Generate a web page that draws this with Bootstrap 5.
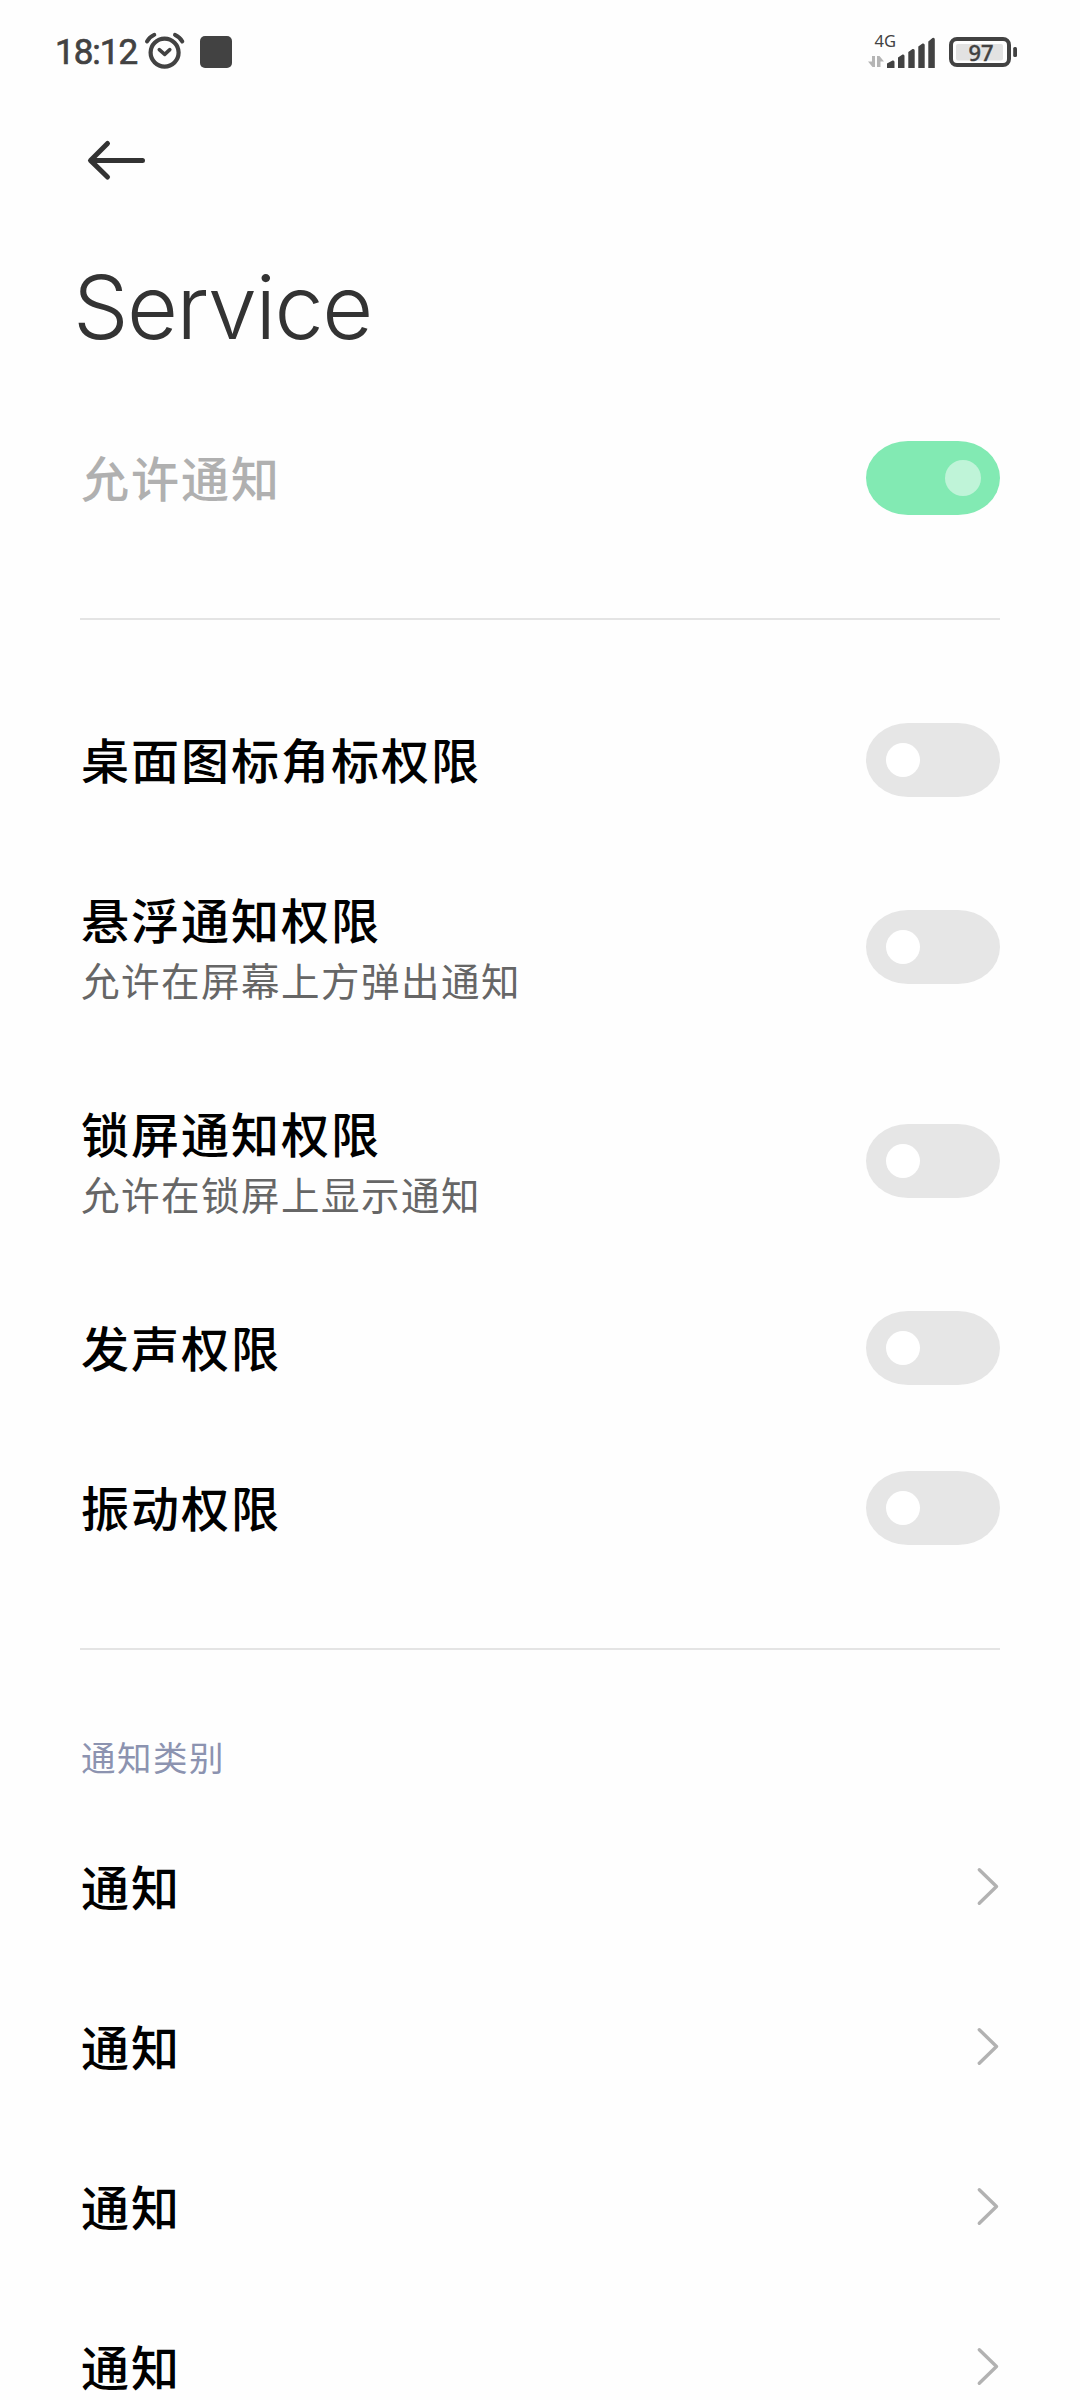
<!DOCTYPE html>
<html lang="zh-CN">
<head>
<meta charset="utf-8">
<meta name="viewport" content="width=device-width, initial-scale=1">
<title>Service</title>
<link href="https://cdn.jsdelivr.net/npm/bootstrap@5.3.0/dist/css/bootstrap.min.css" rel="stylesheet">
<style>
body{background:#fefefe;color:#000;font-family:"Noto Sans CJK SC",sans-serif}
svg{overflow:visible}
.screen{width:1080px;height:2400px;overflow:hidden}
.status{height:104px;padding:0 62px 0 55px;color:#424242}
.clock{font:400 35px/40px Roboto,sans-serif;width:89px;padding-top:1px;letter-spacing:-1px;-webkit-text-stroke:.7px #424242;white-space:nowrap}
.square{margin-left:14px}
.cell-signal{margin-right:12px}
.topbar{height:112px;padding-left:80px}
.page-title{font:300 88px/110px Inter,sans-serif;letter-spacing:-1.5px;color:#333;height:182px;padding:36px 0 0 73px;margin:0}
.setting{height:160px}
.setting.tall{height:214px}
.label{font-size:48px;line-height:62px;letter-spacing:2px;font-weight:500;margin-left:1px;padding-bottom:4px}
.tall .label{padding:2px 0 0}
.hint{font-size:38.5px;line-height:60px;letter-spacing:1.5px;color:#666;margin-left:1px}
.disabled-label{color:#b0b0b0}
.rule{height:2px;background:#e4e4e4;margin:60px 0}
.group-name{font-size:34.5px;line-height:48px;letter-spacing:1.5px;color:#8c93b0;margin:-60px 0 0;height:157px;padding:82px 0 0 1px}
.toggle{width:134px;height:74px;border-radius:42px/37px;background:#e6e6e6;padding:0 20px}
.toggle i{display:block;width:34px;height:34px;border-radius:50%;background:#fff}
.toggle.on{background:#82eab3;justify-content:flex-end;padding-right:19px}
.toggle.on i{width:36px;height:36px;background:#bff4d8}
</style>
<script src="https://cdn.jsdelivr.net/npm/bootstrap@5.3.0/dist/js/bootstrap.bundle.min.js"></script>
</head>
<body>
<div class="screen">
  <header class="status d-flex align-items-center">
    <span class="clock">18:12</span>
    <svg width="42" height="40" viewBox="144 33 42 40" fill="none" stroke="#424242" stroke-linecap="round" stroke-linejoin="round">
      <circle cx="164.6" cy="53.6" r="14" stroke-width="4.200"/>
      <path d="M147 42.5Q149.500 38 154.300 35.800M175 35.800Q180 38 182.300 42.500" stroke-width="4"/>
      <path d="M159.300 50.700L164.700 55.300L169.800 50.700" stroke-width="3.600"/>
    </svg>
    <svg class="square" width="32" height="32"><rect width="32" height="32" rx="5" fill="#424242"/></svg>
    <div class="ms-auto d-flex align-items-center">
      <svg class="cell-signal" width="69" height="40" viewBox="867 32 69 40" fill="#424242">
        <text x="874.500" y="46.800" font-family="Noto Sans" font-weight="400" font-size="15.500" textLength="21.500" lengthAdjust="spacingAndGlyphs">4G</text>
        <path d="M872 56H875V67H872.500L868 61.500H872ZM877 56H879.500L884 61.500H880.500V67H877Z" fill="#b5b5b5"/>
        <path d="M887 63.500L892.500 60.500Q894.500 60 894.500 62V68H887ZM898 57.500L902.500 54.500Q904.500 54 904.500 56V68H898ZM908.300 52L912.500 49Q914.700 48.500 914.700 50.500V68H908.300ZM918.300 46.500L922.500 43.500Q924.700 43 924.700 45V68H918.300ZM928.300 41.500L932.500 38Q934.800 37.300 934.800 39.500V68H928.300Z"/>
      </svg>
      <svg width="70" height="40" viewBox="948 32 70 40" fill="#424242">
        <rect x="951" y="39" width="58" height="26" rx="6" fill="none" stroke="#424242" stroke-width="4"/>
        <rect x="956" y="44" width="47" height="16.500" rx="2" fill="#e2e2e2"/>
        <text x="968.500" y="60.800" font-family="Noto Sans" font-weight="500" font-size="22.500" stroke="#424242" stroke-width=".4" textLength="25" lengthAdjust="spacingAndGlyphs">97</text>
        <rect x="1013.200" y="47" width="3.800" height="10" rx="1.500"/>
      </svg>
    </div>
  </header>
  <nav class="topbar d-flex align-items-center">
    <svg width="72" height="50" viewBox="80 135 72 50" fill="none" stroke="#333" stroke-width="5" stroke-linecap="round" stroke-linejoin="round"><path d="M142.500 160.400H91M107.500 143.500L90.500 160.400L107.500 177"/></svg>
  </nav>
  <h1 class="page-title">Service</h1>
  <main style="margin:0 80px">
    <div class="setting d-flex align-items-center justify-content-between"><div class="label disabled-label">允许通知</div><div class="toggle on d-flex align-items-center"><i></i></div></div>
    <div class="rule"></div>
    <div class="setting d-flex align-items-center justify-content-between"><div class="label">桌面图标角标权限</div><div class="toggle d-flex align-items-center"><i></i></div></div>
    <div class="setting tall d-flex align-items-center justify-content-between"><div><div class="label">悬浮通知权限</div><div class="hint">允许在屏幕上方弹出通知</div></div><div class="toggle d-flex align-items-center"><i></i></div></div>
    <div class="setting tall d-flex align-items-center justify-content-between"><div><div class="label">锁屏通知权限</div><div class="hint">允许在锁屏上显示通知</div></div><div class="toggle d-flex align-items-center"><i></i></div></div>
    <div class="setting d-flex align-items-center justify-content-between"><div class="label">发声权限</div><div class="toggle d-flex align-items-center"><i></i></div></div>
    <div class="setting d-flex align-items-center justify-content-between"><div class="label">振动权限</div><div class="toggle d-flex align-items-center"><i></i></div></div>
    <div class="rule"></div>
    <div class="group-name">通知类别</div>
    <div class="setting d-flex align-items-center justify-content-between"><div class="label">通知</div><svg width="24" height="40" fill="none" stroke="#b2b2b2" stroke-width="3.400" stroke-linecap="round" stroke-linejoin="round"><path d="M3.300 2.700L20.500 19.500L3.300 36.300"/></svg></div>
    <div class="setting d-flex align-items-center justify-content-between"><div class="label">通知</div><svg width="24" height="40" fill="none" stroke="#b2b2b2" stroke-width="3.400" stroke-linecap="round" stroke-linejoin="round"><path d="M3.300 2.700L20.500 19.500L3.300 36.300"/></svg></div>
    <div class="setting d-flex align-items-center justify-content-between"><div class="label">通知</div><svg width="24" height="40" fill="none" stroke="#b2b2b2" stroke-width="3.400" stroke-linecap="round" stroke-linejoin="round"><path d="M3.300 2.700L20.500 19.500L3.300 36.300"/></svg></div>
    <div class="setting d-flex align-items-center justify-content-between"><div class="label">通知</div><svg width="24" height="40" fill="none" stroke="#b2b2b2" stroke-width="3.400" stroke-linecap="round" stroke-linejoin="round"><path d="M3.300 2.700L20.500 19.500L3.300 36.300"/></svg></div>
  </main>
</div>
</body>
</html>
